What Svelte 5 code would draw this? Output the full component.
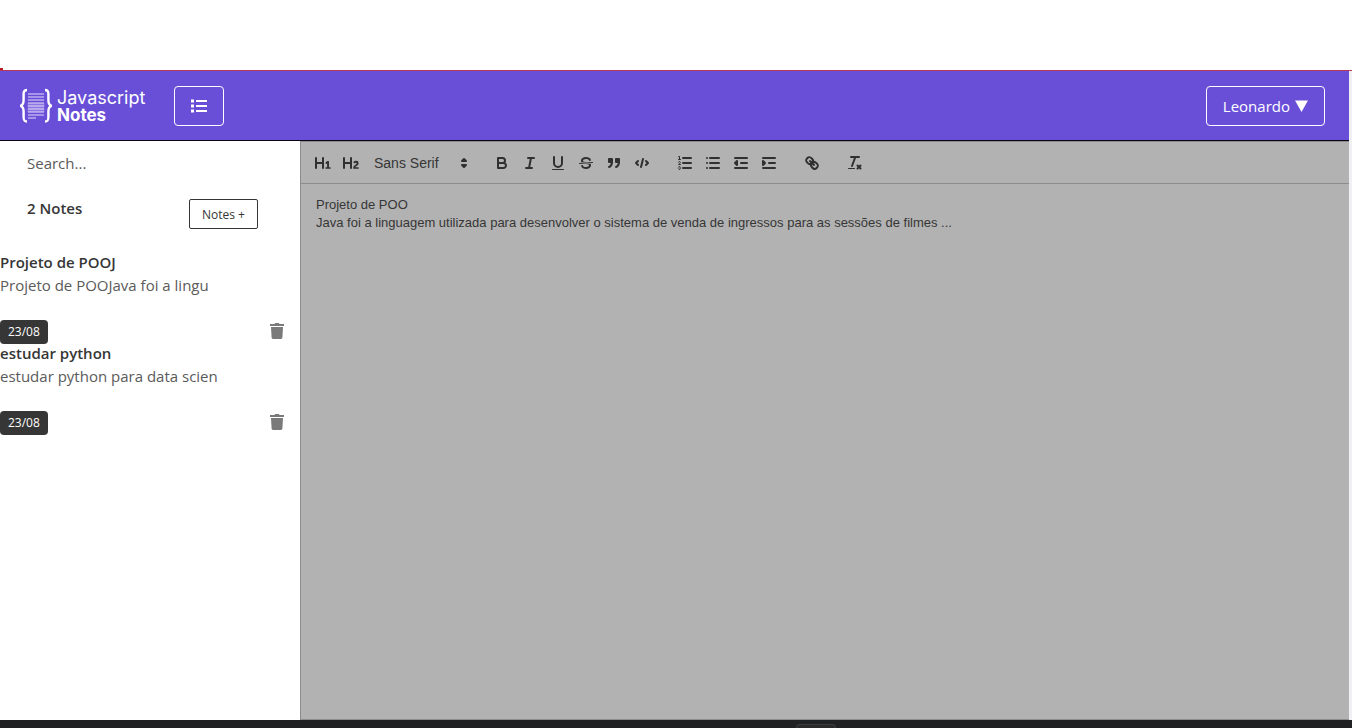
<script>
  const notes = [
    { title: 'Projeto de POOJ', body: 'Projeto de POOJava foi a lingu', date: '23/08' },
    { title: 'estudar python', body: 'estudar python para data scien', date: '23/08' }
  ];

  const inlineTools = [
    { label: 'Bold', svg: '<path class="s" d="M5,4H9.5A2.5,2.5,0,0,1,12,6.5v0A2.5,2.5,0,0,1,9.5,9H5V4Z"/><path class="s" d="M5,9h5.5A2.5,2.5,0,0,1,13,11.5v0A2.5,2.5,0,0,1,10.5,14H5V9Z"/>' },
    { label: 'Italic', svg: '<path class="s" d="M7,4H13M5,14H11M8,14L10,4"/>' },
    { label: 'Underline', svg: '<path class="s" d="M5,3V9a4.012,4.012,0,0,0,4,4H9a4.012,4.012,0,0,0,4-4V3"/><rect class="f" height="1" rx="0.5" width="12" x="3" y="15"/>' },
    { label: 'Strike', svg: '<path class="s thin" d="M15.5,8.5L2.5,9.5"/><path class="f" d="M9.007,8C6.542,7.791,6,7.519,6,6.5,6,5.792,7.283,5,9,5c1.571,0,2.765.679,2.969,1.309a1,1,0,0,0,1.9-.617C13.356,4.106,11.354,3,9,3,6.2,3,4,4.538,4,6.5a3.2,3.2,0,0,0,.5,1.843Z"/><path class="f" d="M8.984,10C11.457,10.208,12,10.479,12,11.5c0,.708-1.283,1.5-3,1.5-1.571,0-2.765-.679-2.969-1.309a1,1,0,1,0-1.9.617C4.644,13.894,6.646,15,9,15c2.8,0,5-1.538,5-3.5a3.2,3.2,0,0,0-.5-1.843Z"/>' },
    { label: 'Blockquote', svg: '<rect class="f s" height="3" width="3" x="4" y="5"/><rect class="f s" height="3" width="3" x="11" y="5"/><path class="f s" d="M7,8c0,4.031-3,5-3,5"/><path class="f s" d="M14,8c0,4.031-3,5-3,5"/>' },
    { label: 'Code', svg: '<path class="s" d="M5,7L3,9L5,11M13,7L15,9L13,11M10,5L8,13"/>' }
  ];
  const listTools = [
    { label: 'Ordered list', svg: '<path class="s" d="M7,4H15M7,9H15M7,14H15"/><path class="s thin" d="M2.5,5.5H4.5"/><path class="f" d="M3.5,6A0.5,0.5,0,0,1,3,5.5V3.085l-0.276.138A0.5,0.5,0,0,1,2.053,3c-0.124-.247-0.023-0.324.224-0.447l1-.5A0.5,0.5,0,0,1,4,2.5v3A0.5,0.5,0,0,1,3.5,6Z"/><path class="s thin" d="M4.5,10.5h-2c0-.234,1.85-1.076,1.85-2.234A0.959,0.959,0,0,0,2.5,8.156"/><path class="s thin" d="M2.5,14.846a0.959,0.959,0,0,0,1.85-.109A0.7,0.7,0,0,0,3.75,14a0.688,0.688,0,0,0,.6-0.736,0.959,0.959,0,0,0-1.85-.109"/>' },
    { label: 'Bullet list', svg: '<path class="s" d="M6,4H15M6,9H15M6,14H15M3,4h0M3,9h0M3,14h0"/>' },
    { label: 'Outdent', svg: '<path class="s" d="M3,14H15M3,4H15M9,9H15"/><path class="f s" d="M5,7V11L3,9Z"/>' },
    { label: 'Indent', svg: '<path class="s" d="M3,14H15M3,4H15M9,9H15"/><path class="f s" d="M3,7V11L5,9Z"/>' }
  ];
  const linkTools = [
    { label: 'Link', svg: '<path class="s" d="M7,7L11,11"/><path class="s" d="M8.9,4.577a3.476,3.476,0,0,1,.36,4.679A3.476,3.476,0,0,1,4.577,8.9C3.185,7.5,2.035,6.4,4.217,4.217S7.5,3.185,8.9,4.577Z"/><path class="s" d="M13.423,9.1a3.476,3.476,0,0,0-4.679-.36,3.476,3.476,0,0,0,.36,4.679c1.392,1.392,2.5,2.542,4.679.36S14.815,10.5,13.423,9.1Z"/>' }
  ];
  const cleanTools = [
    { label: 'Clear formatting', svg: '<path class="s" d="M5,3H13M6,12L9.35,3M11.500,11.500L14.500,14.500M14.500,11.500L11.500,14.500"/><rect class="f" height="1" rx="0.5" width="7" x="2" y="14"/>' }
  ];
  const headings = [
    { label: 'Heading 1', svg: '<path class="f" d="M10,4V14a1,1,0,0,1-2,0V10H3v4a1,1,0,0,1-2,0V4A1,1,0,0,1,3,4V8H8V4a1,1,0,0,1,2,0Zm6.06787,9.209H14.98975V7.59863a.54085.54085,0,0,0-.605-.60547h-.62744a1.01119,1.01119,0,0,0-.748.29688L11.645,8.56641a.5435.5435,0,0,0-.022.8584l.28613.30762a.53861.53861,0,0,0,.84717.0332l.09912-.08789a1.2137,1.2137,0,0,0,.2417-.35254h.02246s-.01123.30859-.01123.60547V13.209H12.041a.54085.54085,0,0,0-.605.60547v.43945a.54085.54085,0,0,0,.605.60547h4.02686a.54085.54085,0,0,0,.605-.60547v-.43945A.54085.54085,0,0,0,16.06787,13.209Z"/>' },
    { label: 'Heading 2', svg: '<path class="f" d="M16.73975,13.81445v.43945a.54085.54085,0,0,1-.605.60547H11.855a.58392.58392,0,0,1-.64893-.60547V14.0127c0-2.90527,3.39941-3.42187,3.39941-4.55469a.77675.77675,0,0,0-.84717-.78125,1.17684,1.17684,0,0,0-.83594.38477c-.2749.26367-.561.374-.85791.13184l-.4292-.34082c-.30811-.24219-.38525-.51758-.1543-.81445a2.97155,2.97155,0,0,1,2.45361-1.17676,2.45393,2.45393,0,0,1,2.68408,2.40918c0,2.45312-3.1792,2.92676-3.27832,3.93848h2.79443A.54085.54085,0,0,1,16.73975,13.81445ZM9,3A.99974.99974,0,0,0,8,4V8H3V4A1,1,0,0,0,1,4V14a1,1,0,0,0,2,0V10H8v4a1,1,0,0,0,2,0V4A.99974.99974,0,0,0,9,3Z"/>' }
  ];
</script>

{#snippet tools(list)}
  {#each list as tool}
    <button class="tool" type="button" aria-label={tool.label}>
      <svg viewBox="0 0 18 18">{@html tool.svg}</svg>
    </button>
  {/each}
{/snippet}

<div class="page">
  <div class="top"><span class="mark"></span></div>
  <div class="app">
    <header>
      <a class="logo" href="#home">
        <svg width="32" height="36" viewBox="0 0 32 36" aria-hidden="true">
          <g fill="none" stroke="#fff" stroke-width="2.4">
            <path d="M7,2C4,2 3.600,3.500 3.600,6V12C3.600,15.500 3,17 0.500,17.800C3,18.600 3.600,20 3.600,23.500V29C3.600,32 4,33.500 7,33.500" />
            <path d="M25,2C28,2 28.400,3.500 28.400,6V12C28.400,15.500 29,17 31.500,17.800C29,18.600 28.400,20 28.400,23.500V29C28.400,32 28,33.500 25,33.500" />
          </g>
          <path d="M7.500,15H24.500V24H7.500Z" fill="#a591ea" opacity=".6" />
          <path d="M8,6H24M8,9H24M8,12H24M8,15H24M8,18H24M8,21H24M8,24H24M8,27H24M8,30H16" stroke="#e3dcfa" stroke-width="1.200" />
        </svg>
        <span class="name">Javascript<strong>Notes</strong></span>
      </a>
      <button class="outlined menu" type="button" aria-label="Toggle notes">
        <svg width="16" height="14" viewBox="0 0 16 14" fill="#fff" aria-hidden="true">
          <path d="M0,0.500H3V3.500H0ZM0,5.500H3V8.500H0ZM0,10.500H3V13.500H0ZM5,1H16V3H5ZM5,6H16V8H5ZM5,11H16V13H5Z" />
        </svg>
      </button>
      <button class="outlined user" type="button">Leonardo
        <svg width="13" height="12" viewBox="0 0 13 12" aria-hidden="true"><path d="M0,0.500H13L6.500,12Z" fill="#fff" /></svg>
      </button>
    </header>
    <main>
      <aside>
        <input class="search" type="text" placeholder="Search..." aria-label="Search" />
        <div class="count">
          <h2>2 Notes</h2>
          <button class="add" type="button">Notes +</button>
        </div>
        <ul>
          {#each notes as note}
            <li>
              <h3>{note.title}</h3>
              <p>{note.body}</p>
              <div class="meta">
                <span class="tag">{note.date}</span>
                <button class="trash" type="button" aria-label="Delete note">
                  <svg width="14" height="16" viewBox="0 0 14 16" fill="#7a7a7a" aria-hidden="true">
                    <path d="M0,1H4.500L5.200,0H8.800L9.500,1H14V3H0ZM1,4H13L12.400,14.600Q12.300,16 11,16H3Q1.700,16 1.600,14.600Z" />
                  </svg>
                </button>
              </div>
            </li>
          {/each}
        </ul>
      </aside>
      <section class="editor">
        <div class="toolbar">
          <div class="group">
            {@render tools(headings)}
            <div class="picker">
              <select aria-label="Font"><option>Sans Serif</option></select>
              <svg viewBox="0 0 18 18" aria-hidden="true"><path class="f s" d="M7,11L9,13L11,11ZM7,7L9,5L11,7Z" /></svg>
            </div>
          </div>
          <div class="group">{@render tools(inlineTools)}</div>
          <div class="group">{@render tools(listTools)}</div>
          <div class="group">{@render tools(linkTools)}</div>
          <div class="group">{@render tools(cleanTools)}</div>
        </div>
        <div class="content" contenteditable="true" role="textbox" tabindex="0" aria-label="Note">
          <p>Projeto de POO</p>
          <p>Java foi a linguagem utilizada para desenvolver o sistema de venda de ingressos para as sessões de filmes ...</p>
        </div>
      </section>
    </main>
  </div>
  <footer><span class="handle"></span></footer>
</div>

<style>
  :global(body) { margin: 0; background: #fff; }
  * { box-sizing: border-box; }
  h2, h3, p, ul { margin: 0; padding: 0; }
  button, input, select { font-family: inherit; margin: 0; padding: 0; border: 0; background: none; color: inherit; }
  button { cursor: pointer; }
  svg { display: block; flex: none; }
  .page {
    display: flex;
    flex-direction: column;
    min-height: 100vh;
    font-family: "Segoe UI", "Open Sans", sans-serif;
    font-size: 15px;
    color: #363636;
  }
  .top { height: 71px; display: flex; align-items: flex-end; border-bottom: 1px solid #b8375c; }
  .mark { width: 3px; height: 2px; background: #b81c22; }
  .app { flex: 1; display: flex; flex-direction: column; border-right: 3px solid #f0eff1; }
  header {
    height: 70px;
    display: flex;
    align-items: center;
    padding: 0 24px 0 20px;
    background: #694fd7;
    border-bottom: 1px solid #090412;
    color: #fff;
  }
  .logo { display: flex; align-items: center; gap: 5px; width: 154px; color: #fff; text-decoration: none; }
  .name { font: 400 18px/18px Inter, sans-serif; }
  .name strong { display: block; font-size: 17px; font-weight: 700; line-height: 16px; }
  .outlined {
    height: 40px;
    display: flex;
    align-items: center;
    justify-content: center;
    border: 1px solid #fff;
    border-radius: 4px;
  }
  .menu { width: 50px; }
  .user { margin-left: auto; padding: 0 16px; gap: 5px; font-size: 15px; }
  main { flex: 1; display: flex; }
  aside { width: 300px; flex: none; }
  .search { display: block; width: 100%; height: 44px; padding: 0 27px; font-size: 15px; outline: 0; }
  .search::placeholder { color: #5a5a5a; opacity: 1; }
  .count { display: flex; justify-content: space-between; align-items: flex-start; padding: 14px 42px 22px 27px; }
  h2, h3 { font-size: 15px; font-weight: 600; line-height: 23px; }
  h2 { line-height: 18px; }
  .add {
    width: 69px;
    height: 30px;
    border: 1px solid #363636;
    border-radius: 2px;
    font-size: 12px;
  }
  ul { list-style: none; }
  li p { height: 46px; font-size: 15px; line-height: 23px; color: #5a5a5a; white-space: nowrap; }
  .meta { display: flex; justify-content: space-between; height: 22px; padding-right: 16px; }
  .tag {
    height: 24px;
    padding: 0 8px;
    border-radius: 4px;
    background: #363636;
    color: #fff;
    font-size: 12px;
    line-height: 24px;
  }
  .editor {
    flex: 1;
    min-width: 0;
    display: flex;
    flex-direction: column;
    background: #b2b2b2;
    border: 1px solid #8c8c8c;
    border-right: 0;
    font-family: "Liberation Sans", Arial, sans-serif;
  }
  .toolbar { display: flex; flex-wrap: wrap; gap: 15px; padding: 9px 8px 8px; border-bottom: 1px solid #8c8c8c; }
  .group { display: flex; }
  .tool { width: 28px; height: 24px; padding: 3px 5px; }
  .toolbar svg { width: 18px; height: 18px; }
  .toolbar :global(.s) { fill: none; stroke: #303030; stroke-width: 2; stroke-linecap: round; stroke-linejoin: round; }
  .toolbar :global(.thin) { stroke-width: 1; }
  .toolbar :global(.f) { fill: #303030; }
  .picker { display: grid; width: 108px; height: 24px; align-items: center; }
  .picker select { grid-area: 1 / 1; appearance: none; width: 100%; height: 24px; padding-left: 9px; font-size: 14px; font-weight: 500; color: #363636; }
  .picker svg { grid-area: 1 / 1; justify-self: end; pointer-events: none; }
  .content { flex: 1; padding: 12px 15px; font-size: 13px; line-height: 18px; outline: 0; }
  footer { height: 8px; display: flex; justify-content: center; align-items: flex-end; padding-left: 280px; background: #202122; }
  .handle { width: 40px; height: 4px; border: 1px solid #3c3c3c; border-bottom: 0; border-radius: 4px 4px 0 0; background: #2a2a2a; }
</style>
